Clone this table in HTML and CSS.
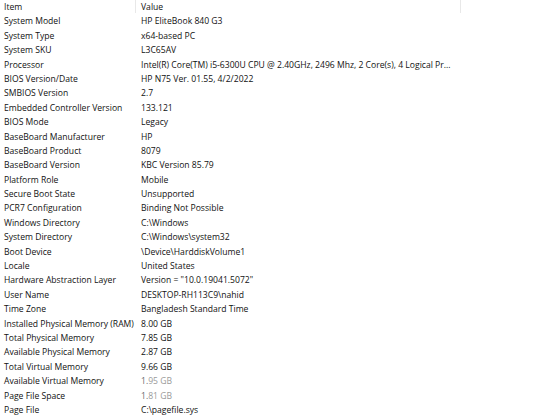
FILE: index.html
```html
<!DOCTYPE html>
<html>
<head>
<meta charset="utf-8">
<link rel="stylesheet" href="styles.css">
</head>
<body>
<div class="list">
  <div class="row head">
    <div class="c1">Item</div>
    <div class="c2">Value</div>
    <div class="c3"></div>
  </div>
  <div class="row"><div class="c1">System Model</div><div class="c2">HP EliteBook 840 G3</div></div>
  <div class="row"><div class="c1">System Type</div><div class="c2">x64-based PC</div></div>
  <div class="row"><div class="c1">System SKU</div><div class="c2">L3C65AV</div></div>
  <div class="row"><div class="c1">Processor</div><div class="c2">Intel(R) Core(TM) i5-6300U CPU @ 2.40GHz, 2496 Mhz, 2 Core(s), 4 Logical Pr...</div></div>
  <div class="row"><div class="c1">BIOS Version/Date</div><div class="c2">HP N75 Ver. 01.55, 4/2/2022</div></div>
  <div class="row"><div class="c1">SMBIOS Version</div><div class="c2">2.7</div></div>
  <div class="row"><div class="c1">Embedded Controller Version</div><div class="c2">133.121</div></div>
  <div class="row"><div class="c1">BIOS Mode</div><div class="c2">Legacy</div></div>
  <div class="row"><div class="c1">BaseBoard Manufacturer</div><div class="c2">HP</div></div>
  <div class="row"><div class="c1">BaseBoard Product</div><div class="c2">8079</div></div>
  <div class="row"><div class="c1">BaseBoard Version</div><div class="c2">KBC Version 85.79</div></div>
  <div class="row"><div class="c1">Platform Role</div><div class="c2">Mobile</div></div>
  <div class="row"><div class="c1">Secure Boot State</div><div class="c2">Unsupported</div></div>
  <div class="row"><div class="c1">PCR7 Configuration</div><div class="c2">Binding Not Possible</div></div>
  <div class="row"><div class="c1">Windows Directory</div><div class="c2">C:\Windows</div></div>
  <div class="row"><div class="c1">System Directory</div><div class="c2">C:\Windows\system32</div></div>
  <div class="row"><div class="c1">Boot Device</div><div class="c2">\Device\HarddiskVolume1</div></div>
  <div class="row"><div class="c1">Locale</div><div class="c2">United States</div></div>
  <div class="row"><div class="c1">Hardware Abstraction Layer</div><div class="c2">Version = "10.0.19041.5072"</div></div>
  <div class="row"><div class="c1">User Name</div><div class="c2">DESKTOP-RH113C9\nahid</div></div>
  <div class="row"><div class="c1">Time Zone</div><div class="c2">Bangladesh Standard Time</div></div>
  <div class="row"><div class="c1">Installed Physical Memory (RAM)</div><div class="c2">8.00 GB</div></div>
  <div class="row"><div class="c1">Total Physical Memory</div><div class="c2">7.85 GB</div></div>
  <div class="row"><div class="c1">Available Physical Memory</div><div class="c2">2.87 GB</div></div>
  <div class="row"><div class="c1">Total Virtual Memory</div><div class="c2">9.66 GB</div></div>
  <div class="row"><div class="c1">Available Virtual Memory</div><div class="c2 faded"><span class="mid">1.</span>95 GB</div></div>
  <div class="row"><div class="c1">Page File Space</div><div class="c2 faded"><span class="mid">1.</span>81 GB</div></div>
  <div class="row"><div class="c1">Page File</div><div class="c2">C:\pagefile.sys</div></div>
</div>
</body>
</html>
```
FILE: styles.css
```css
html, body {
  margin: 0;
  padding: 0;
  background: #ffffff;
}
body {
  font-family: "Open Sans", "Noto Sans", sans-serif;
  font-size: 8.6px;
  color: #111111;
}
.list {
  display: flex;
  flex-direction: column;
}
.row {
  display: grid;
  grid-template-columns: 136px 325px 1fr;
  height: 14.4px;
  line-height: 14.4px;
}
.c1 {
  padding-left: 4px;
  white-space: nowrap;
  overflow: hidden;
}
.c2 {
  padding-left: 5px;
  padding-right: 2px;
  white-space: nowrap;
  overflow: hidden;
}
.head .c1,
.head .c2 {
  border-right: 1px solid #e8e8e8;
  height: 13px;
}
.faded {
  color: #9a9a9a;
}
.mid {
  color: #6a6a6a;
}
```
